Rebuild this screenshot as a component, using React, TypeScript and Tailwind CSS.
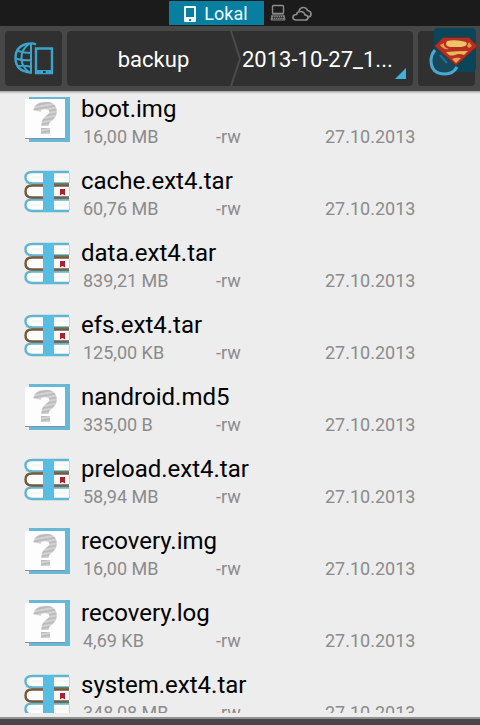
const files = [
  { name: "boot.img", size: "16,00 MB", kind: "unknown" },
  { name: "cache.ext4.tar", size: "60,76 MB", kind: "archive" },
  { name: "data.ext4.tar", size: "839,21 MB", kind: "archive" },
  { name: "efs.ext4.tar", size: "125,00 KB", kind: "archive" },
  { name: "nandroid.md5", size: "335,00 B", kind: "unknown" },
  { name: "preload.ext4.tar", size: "58,94 MB", kind: "archive" },
  { name: "recovery.img", size: "16,00 MB", kind: "unknown" },
  { name: "recovery.log", size: "4,69 KB", kind: "unknown" },
  { name: "system.ext4.tar", size: "348,08 MB", kind: "archive" },
];

function ArchiveIcon() {
  return (
    <svg viewBox="0 0 48 48" className="size-12 shrink-0" aria-hidden="true">
      <path d="M46 3H8Q1 3 1 9.500T8 16H46Z" fill="#fdfdfd" />
      <path d="M46 17H8Q1 17 1 23.500T8 30H46Z" fill="#fdfdfd" />
      <path d="M46 31H8Q1 31 1 37.500T8 44H46Z" fill="#fdfdfd" />
      <path d="M45 4H8Q1.500 4 1.500 9.500T8 15.500H45" fill="none" stroke="#62b5cf" strokeWidth="2.400" />
      <path d="M45 31.500H8Q1.500 31.500 1.500 37T8 43H45" fill="none" stroke="#62b5cf" strokeWidth="2.400" />
      <path d="M45 17.500H8Q1.500 17.500 1.500 23.500T8 29.500H45" fill="none" stroke="#76583b" strokeWidth="2.400" />
      <path d="M20 16H45M20 30H45" stroke="#72694f" strokeWidth="1.500" />
      <path d="M8 9H45M8 37H45" stroke="#eaf0e8" strokeWidth="1" />
      <path d="M45.500 5V15M45.500 19V28M45.500 32V43" stroke="#cfd3d5" strokeWidth="1" />
      <path d="M19 3H30V44H19Z" fill="#57bde3" />
      <path d="M36 21H41V27.500L38.500 26L36 27.500Z" fill="#ac1f38" />
    </svg>
  );
}

function UnknownIcon() {
  return (
    <svg viewBox="0 0 48 48" className="size-12 shrink-0" aria-hidden="true">
      <defs>
        <pattern id="stripes" width="8" height="4" patternUnits="userSpaceOnUse" patternTransform="rotate(-10)">
          <rect width="8" height="4" fill="#bcbcbc" />
          <rect width="8" height="2" fill="#d2d2d2" />
        </pattern>
      </defs>
      <path d="M5 0H46V46H5Z" fill="#65b9d6" />
      <path d="M1 5H41V43H1Z" fill="#7e959e" />
      <path d="M1 3H41V42H1Z" fill="#fdfdfd" />
      <path
        d="M13 15Q14 9.500 21 9.500Q29 9.500 29 15.500Q29 20 24 23Q21 25 21 30"
        fill="none"
        stroke="url(#stripes)"
        strokeWidth="7.500"
      />
      <path d="M17 32H26V38H17Z" fill="url(#stripes)" />
    </svg>
  );
}

function PhoneIcon() {
  return (
    <svg viewBox="0 0 12 16" className="w-3 h-4" aria-hidden="true">
      <path fillRule="evenodd" d="M1 0H11Q12 0 12 1V15Q12 16 11 16H1Q0 16 0 15V1Q0 0 1 0ZM2 2V11H10V2ZM5 13V15H7V13Z" fill="#f2ffff" />
    </svg>
  );
}

function LaptopIcon() {
  return (
    <svg viewBox="0 0 16 18" className="w-4 h-[18px]" fill="none" stroke="#8c8c8c" aria-hidden="true">
      <rect x="2.500" y="1.500" width="11" height="8" rx="1" strokeWidth="1.400" />
      <path d="M2 12.500H14M1.500 14.500H14.500" strokeWidth="1.500" strokeDasharray="1.500 .7" />
      <path d="M2 11H14L15 16H1Z" />
    </svg>
  );
}

function CloudIcon() {
  return (
    <svg viewBox="0 0 20 16" className="w-5 h-4" fill="none" stroke="#8c8c8c" strokeWidth="1.700" aria-hidden="true">
      <path d="M4.500 14H13Q16 14 16 11.500T13 9Q12 5.500 8.500 5.500T4.500 8.500Q1 8.500 1 11.300T4.500 14Z" />
      <path d="M7 5Q8 1.500 11.500 1.500Q14.500 1.500 15.500 4.500Q19 5 19 8T16 11" />
    </svg>
  );
}

function NetworkIcon() {
  return (
    <svg viewBox="0 0 40 34" className="w-10 h-[34px]" fill="none" stroke="#3ba4ca" aria-hidden="true">
      <path d="M22 2.500Q19 1 16 1.500Q1.500 3 1.500 16T16 30.500H18" strokeWidth="2.400" />
      <path d="M17 2V31M15 2Q7.500 7 7.500 16T15 30M4 9Q10 11 18 11M1.500 16.500Q9 19 18 18M4 24Q10 23 18 25" strokeWidth="2" />
      <path d="M19.500 4H39V32.500H19.500Z" fill="#303030" stroke="none" />
      <path d="M22 6.500H38V31H22Z" strokeWidth="2.400" />
      <path d="M21 28H39V32H21Z" fill="#3ba4ca" stroke="none" />
      <path d="M29 29H31.500V31H29Z" fill="#222" stroke="none" />
    </svg>
  );
}

function HeroIcon() {
  return (
    <svg viewBox="0 0 57 55" className="h-[55px] w-full overflow-visible" aria-hidden="true">
      <rect x="16" y="-3" width="42" height="44" rx="4" fill="#0a465a" />
      <circle cx="27" cy="29" r="14" fill="#17485c" />
      <path d="M17 19Q13 24 13 29Q13 43 27 43Q35 43 39 36" fill="none" stroke="#48a9d1" strokeWidth="3" />
      <path d="M22 24L29 32" stroke="#256d89" strokeWidth="2" />
      <path d="M25 6H51L60 15L38 35L16 15Z" fill="#6b2928" />
      <path d="M25 7H51L59 15L38 34L17 15Z" fill="#b92c22" />
      <path d="M29 10Q38 8 48 11Q51 15 43 16H32Q26 15 29 10Z" fill="#ecc568" />
      <path d="M22 14L26 12Q25 16 31 18Q25 19 22 14Z" fill="#dda04a" />
      <path d="M51 11L54 15L51 17L49 15Z" fill="#dda04a" />
      <path d="M28 21Q38 20 50 20L46 24Q41 22 37 24Q33 25 31 24Z" fill="#e7b957" />
      <path d="M34 28Q38 26 43 27L38 32Z" fill="#e0a54d" />
    </svg>
  );
}

function StatusTabs() {
  return (
    <nav className="flex h-[26px] shrink-0 items-start justify-center bg-[#1b1b1b]">
      <button className="mt-px flex h-6 w-[95px] items-center justify-center gap-2 bg-[#087fa1] pt-[2px] text-lg/6 text-[#edffff]">
        <PhoneIcon />
        Lokal
      </button>
      <button aria-label="Network" className="ml-[6px] mt-1">
        <LaptopIcon />
      </button>
      <button aria-label="Cloud" className="ml-[6px] mt-[6px]">
        <CloudIcon />
      </button>
    </nav>
  );
}

function Toolbar() {
  return (
    <header className="flex h-[65px] shrink-0 gap-[5px] bg-[#474747] p-[5px] text-[22px] text-white">
      <button aria-label="Storage" className="flex w-[57px] items-center justify-center rounded-sm bg-[#303030]">
        <NetworkIcon />
      </button>
      <div className="relative flex flex-1 rounded-sm bg-[#303030]">
        <button className="w-[163px] pt-[2px] pl-[10px] text-center">backup</button>
        <svg viewBox="0 0 12 55" className="h-[55px] w-3 shrink-0" fill="none" stroke="#4b4b4b" strokeWidth="2" aria-hidden="true">
          <path d="M1 0L10 28L1 55" />
        </svg>
        <button className="flex-1 pt-[2px] text-left">2013-10-27_1...</button>
        <svg viewBox="0 0 11 11" className="absolute right-[7px] bottom-[7px] size-[11px]" aria-hidden="true">
          <path d="M11 0V11H0Z" fill="#3fb1dc" />
        </svg>
      </div>
      <button aria-label="Close" className="w-[57px] rounded-sm bg-[#303030]">
        <HeroIcon />
      </button>
    </header>
  );
}

function App() {
  return (
    <div className="flex h-screen flex-col bg-[#ededed] font-['Roboto',sans-serif]">
      <StatusTabs />
      <Toolbar />
      <div className="h-[6px] shrink-0 bg-linear-to-b from-[#a8a5a5] to-[#ededed] to-50%" />
      <main className="flex-1 overflow-hidden">
        <ul className="-mt-[13px]">
          {files.map((file) => (
            <li key={file.name} className="flex h-[72px] items-center gap-[9px] pl-6">
              {file.kind === "archive" ? <ArchiveIcon /> : <UnknownIcon />}
              <div className="flex-1 pt-[5px]">
                <h2 className="text-2xl/7 text-black">{file.name}</h2>
                <div className="grid grid-cols-[133px_109px_1fr] pl-[2px] text-lg/7 text-[#8b8b8b]">
                  <span>{file.size}</span>
                  <span>-rw</span>
                  <time dateTime="2013-10-27">27.10.2013</time>
                </div>
              </div>
            </li>
          ))}
        </ul>
      </main>
      <footer className="mt-1 h-2 shrink-0 border-t-2 border-[#929292] bg-[#474747]" />
    </div>
  );
}

export default App;
